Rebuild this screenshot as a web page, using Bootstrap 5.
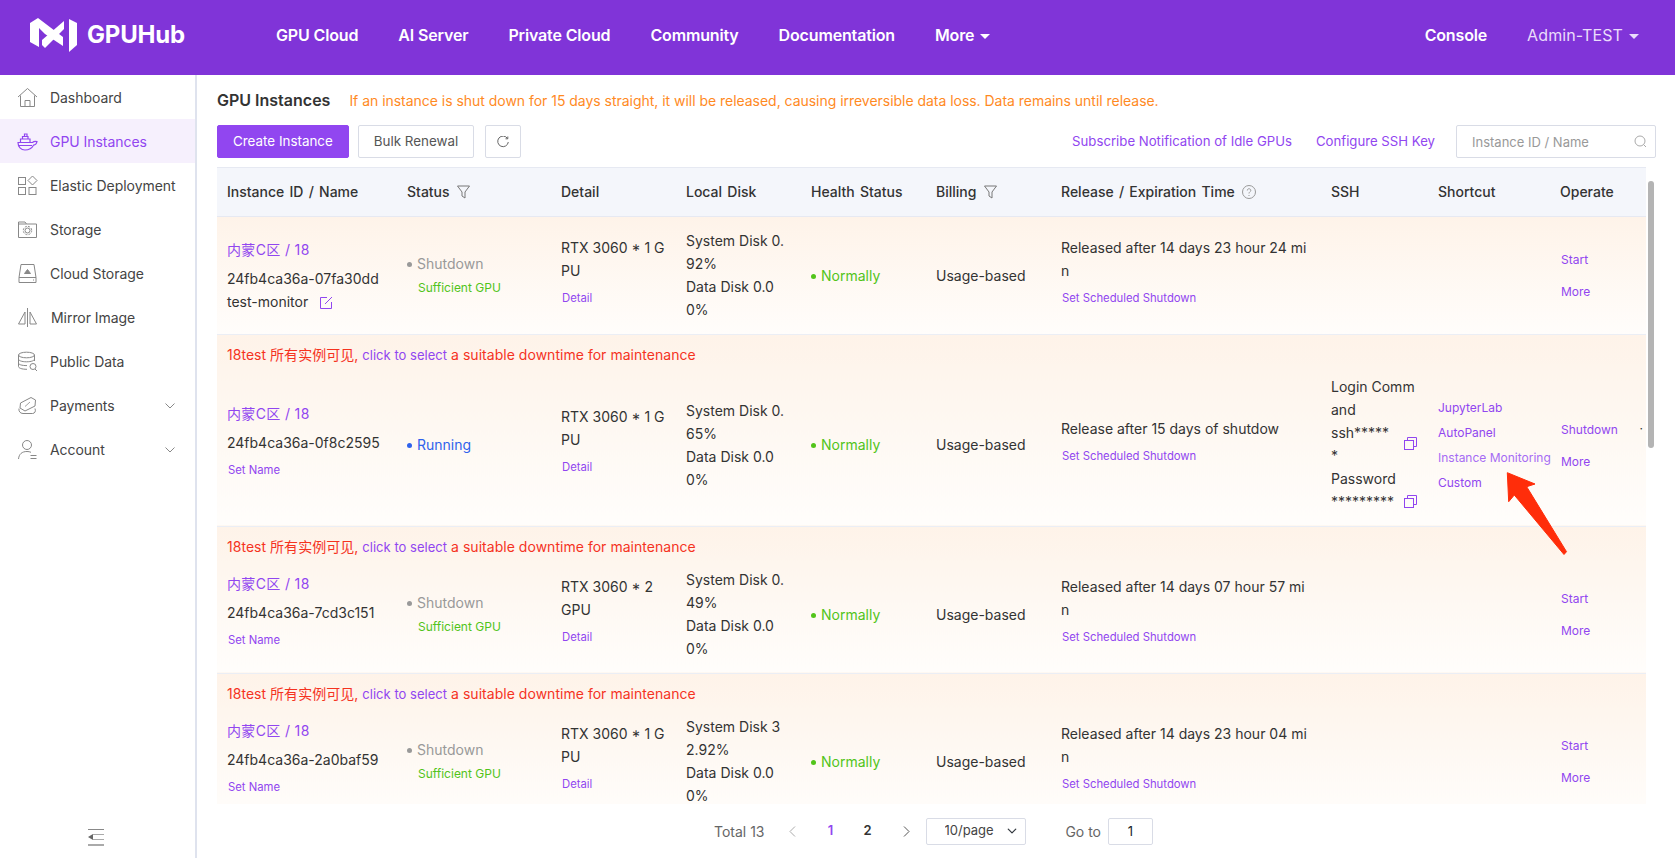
<!DOCTYPE html>
<html lang="en">
<head>
  <meta charset="UTF-8">
  <meta name="viewport" content="width=device-width, initial-scale=1.0">
  <title>GPUHub - GPU Instances</title>
  <link rel="stylesheet" href="https://cdn.jsdelivr.net/npm/bootstrap@5.3.0/dist/css/bootstrap.min.css">
  <style>
    :root { --hub-purple: #9146f0; }
    html, body { height: 100%; }
    body {
      font-family: Inter, "Noto Sans CJK SC", sans-serif;
      font-size: 14px;
      color: #333;
      overflow: hidden;
    }
    a { text-decoration: none; color: var(--hub-purple); }
    .hub-shell { height: 100vh; }
    .hub-top { height: 75px; background: #8034d8; padding: 0 36px 5px 30px; }
    .hub-brand { gap: 10px; width: 246px; color: #fff; font-size: 24px; font-weight: 700; padding: 0; margin: 0; letter-spacing: -.2px; }
    .hub-brand:hover { color: #fff; }
    .hub-top .nav { gap: 40px; }
    .hub-top .nav-link { color: #fff; font-size: 16px; font-weight: 600; padding: 0; letter-spacing: -.15px; }
    .hub-caret { display: inline-block; width: 0; height: 0; border: 5px solid transparent; border-top-color: currentColor; border-bottom: 0; margin-left: 6px; vertical-align: 2px; }
    .hub-top .hub-user { font-weight: 400; color: #eadcfb; letter-spacing: .1px; }
    .hub-main { min-height: 0; }
    .hub-side { width: 197px; flex: none; border-right: 2px solid #dfe3ee; position: relative; }
    .hub-side .nav-link {
      display: flex; align-items: center; height: 44px; padding: 1px 0 0 17px; color: #444; font-size: 14px; gap: 12px; border-radius: 0; letter-spacing: -.05px;
    }
    .hub-side .nav-link svg { flex: none; width: 21px; height: 21px; color: #888; }
    .hub-side .nav-link.active { background: #f6f0fd; color: var(--hub-purple); }
    .hub-side .nav-link.active svg { color: var(--hub-purple); }
    .hub-side .nav-link .hub-chev { margin-left: auto; margin-right: 20px; width: 10px; height: 6px; }
    .hub-mirror { margin-left: 1px; }
    .hub-fold { position: absolute; left: 88px; bottom: 12px; }
    .hub-page { min-width: 0; padding: 0 19px 0 20px; position: relative; }
    .hub-title { height: 50px; }
    .hub-title h1 { font-size: 16px; font-weight: 600; margin: 2px 0 0; color: #333; }
    .hub-warn { color: #ff8a1f; margin-left: 19px; letter-spacing: -.03px; }
    .hub-tools { height: 33px; margin-bottom: 9px; }
    .hub-tools .btn { height: 33px; font-size: 13.4px; padding: 0 15px; border-radius: 2px; }
    .hub-btn-main { background: var(--hub-purple); border-color: var(--hub-purple); color: #fff; }
    .hub-tools .hub-btn-plain { background: #fff; border-color: #d9dce6; color: #555; margin-left: 9px; }
    .hub-tools .hub-btn-icon { width: 36px; padding: 0; margin-left: 11px; display: inline-flex; align-items: center; justify-content: center; }
    .hub-tool-link { font-size: 13.2px; }
    .hub-search { width: 200px; margin-left: 21px; position: relative; }
    .hub-search .form-control { height: 33px; border-radius: 2px; border-color: #d9dce6; font-size: 13px; padding: 0 30px 0 15px; }
    .hub-search .form-control::placeholder { color: #999; }
    .hub-search svg { position: absolute; right: 9px; top: 10px; }
    .hub-tablewrap { height: 637px; overflow: hidden; width: 1429px; position: relative; }
    .hub-table { table-layout: fixed; width: 1429px; margin: 0; --bs-table-bg: transparent; color: #333; }
    .hub-table th {
      height: 49px; background: #f4f6fb; font-weight: 500; color: #333; vertical-align: middle; padding: 0 9px 2px; word-spacing: 1.5px;
      border-top: 1px solid #e6e9f2; border-bottom: 1px solid #e6e9f2;
    }
    .hub-table th svg { margin-left: 2px; vertical-align: -2px; }
    .hub-table th:first-child, .hub-table td:first-child { padding-left: 10px; }
    .hub-table td { padding: 12px 9px 13px; line-height: 23px; vertical-align: middle; word-break: break-all; border: 0; }
    .hub-row { background: linear-gradient(180deg, #fef3e9 0%, #fffdfb 100%); border-bottom: 1px solid #ebeef5; }
    .hub-table td.hub-note { padding: 11px 9px 0 10px; height: 28px; color: #f5331f; word-break: normal; line-height: 17px; letter-spacing: .03px; }
    .hub-note a { font-size: 13px; line-height: 17px; }
    .hub-small { font-size: 11.3px; line-height: 23px; display: block; margin: 5px 0 5px 1px; }
    .hub-name { display: block; margin-bottom: 6px; letter-spacing: .35px; }
    .hub-gray { color: #999; }
    .hub-green { color: #52c41a; }
    .hub-blue { color: #2f62ec; }
    .hub-dot { display: inline-block; width: 5px; height: 5px; border-radius: 50%; background: currentColor; margin-right: 5px; vertical-align: 2px; }
    .hub-hint { color: #52c41a; font-size: 12px; display: block; padding: 1px 0 0 11px; }
    .hub-links a { display: block; font-size: 12px; line-height: 25px; white-space: nowrap; }
    .hub-table td.hub-ops { padding: 14px 9px 13px 10px; }
    .hub-ops a { display: block; font-size: 12px; line-height: 18px; }
    .hub-ops a + a { margin-top: 14px; }
    .hub-links a.hub-light { color: #a66cf4; }
    .hub-table td.hub-ssh { padding-top: 11px; padding-bottom: 13px; }
    .hub-secret { position: relative; }
    .hub-secret svg { position: absolute; left: 73px; bottom: 17px; }
    .hub-secret + .hub-secret svg { bottom: 5px; }
    .hub-more-dot { position: absolute; right: 3px; top: 256px; font-size: 12px; line-height: 1; color: #333; }
    .hub-scroll { position: absolute; left: 1648px; top: 181px; width: 6px; height: 267px; border-radius: 3px; background: #b4b4b4; }
    .hub-arrow { position: absolute; left: 1500px; top: 465px; width: 75px; height: 100px; pointer-events: none; }
    .hub-pager { height: 54px; color: #666; padding-left: 497px; }
    .hub-pager .page-link { border: 0; background: none; padding: 0; font-weight: 600; font-size: 13px; color: #333; text-align: center; width: 38px; }
    .hub-pager .page-item.active .page-link { color: var(--hub-purple); background: none; }
    .hub-pager .form-select { width: 100px; height: 27px; font-size: 13px; border-radius: 2px; border-color: #d9dce6; padding: 0 0 0 18px; color: #444; background-position: right 8px center; background-size: 10px; }
    .hub-pager .form-control { width: 45px; height: 27px; font-size: 13px; border-radius: 2px; border-color: #d9dce6; text-align: center; padding: 0; margin-right: 503px; }
    .hub-goto { margin-right: 7px; }
  </style>
</head>
<body>
  <div class="hub-shell d-flex flex-column">
    <nav class="navbar hub-top flex-nowrap">
      <a class="navbar-brand hub-brand d-flex align-items-center" href="#">
        <svg width="47" height="34" viewBox="0 0 47 34" fill="#fff"><polygon points="0,5 8,0 33,19 33,28 15,16 9,10 9,29 0,24"/><polygon points="34,3 34,11 15,30 12,27 12,22"/><polygon points="39,1 47,5 47,27 39,34"/></svg>
        <span>GPUHub</span>
      </a>
      <ul class="nav me-auto">
        <li class="nav-item"><a class="nav-link" href="#">GPU Cloud</a></li>
        <li class="nav-item"><a class="nav-link" href="#">AI Server</a></li>
        <li class="nav-item"><a class="nav-link" href="#">Private Cloud</a></li>
        <li class="nav-item"><a class="nav-link" href="#">Community</a></li>
        <li class="nav-item"><a class="nav-link" href="#">Documentation</a></li>
        <li class="nav-item"><a class="nav-link" href="#">More<span class="hub-caret"></span></a></li>
      </ul>
      <ul class="nav">
        <li class="nav-item"><a class="nav-link" href="#">Console</a></li>
        <li class="nav-item"><a class="nav-link hub-user" href="#">Admin-TEST<span class="hub-caret"></span></a></li>
      </ul>
    </nav>

    <div class="hub-main d-flex flex-grow-1">
      <aside class="hub-side">
        <nav class="nav flex-column">
          <a class="nav-link" href="#"><svg viewBox="0 0 21 21" fill="none" stroke="currentColor"><path d="M1 10 10.500 1.500 20 10M3.500 8.500V19.500H17.500V8.500M8 19.500V13.500H13V19.500"/></svg>Dashboard</a>
          <a class="nav-link active" href="#"><svg viewBox="0 0 21 21" fill="none" stroke="currentColor" stroke-width="1.200"><path d="M1 11.500H15.500C16.500 10.500 18 10 20 10.500 19.500 13 18 14 16.500 14.200 15 17 12 19 8 19 4 19 1 16 1 11.500Z"/><path d="M3.500 11V8H13V11M5.500 8V5.500H11V8M7.500 5.500V3H10V5.500M2 14.500H15"/></svg>GPU Instances</a>
          <a class="nav-link" href="#"><svg viewBox="0 0 21 21" fill="none" stroke="currentColor"><rect x="1.500" y="2.500" width="7" height="7"/><rect x="1.500" y="12.500" width="7" height="7"/><rect x="12" y="12.500" width="7" height="7"/><path d="M15.500 1 20 5.500 15.500 10 11 5.500Z"/></svg>Elastic Deployment</a>
          <a class="nav-link" href="#"><svg viewBox="0 0 21 21" fill="none" stroke="currentColor"><path d="M1.500 3H8L9.500 5H19.500V18.500H1.500Z"/><path d="M1.500 5H9.500"/><circle cx="10.500" cy="11.500" r="2.500"/><circle cx="10.500" cy="11.500" r="4.200" stroke-dasharray="2 1.300"/></svg>Storage</a>
          <a class="nav-link" href="#"><svg viewBox="0 0 21 21" fill="none" stroke="currentColor"><path d="M4 1.500H17L19 14.500V19.500H2V14.500ZM2 14.500H19"/><path d="M7.500 10.500 10.500 6.500 13.500 10.500Z" fill="currentColor"/><path d="M16 17H17"/></svg>Cloud Storage</a>
          <a class="nav-link" href="#"><svg viewBox="0 0 21 21" fill="none" stroke="currentColor"><path d="M1.500 17H8V5ZM19.500 17H13V5ZM10.500 1V20"/></svg><span class="hub-mirror">Mirror Image</span></a>
          <a class="nav-link" href="#"><svg viewBox="0 0 21 21" fill="none" stroke="currentColor"><ellipse cx="9.500" cy="4" rx="8" ry="2.800"/><path d="M1.500 4V15.500C1.500 17 4.500 18.300 10 18.300M17.500 4V10M1.500 8C1.500 9.500 4.500 10.800 9.500 10.800S17.500 9.500 17.500 8M1.500 12C1.500 13.500 4.500 14.600 10 14.600"/><circle cx="16" cy="15.500" r="3"/><path d="M18 18 20 20"/></svg>Public Data</a>
          <a class="nav-link" href="#"><svg viewBox="0 0 21 21" fill="none" stroke="currentColor"><path d="M3.500 8 14 2.500 18.500 5 18 11 8 16 3 13Z"/><path d="M2 13.500C1.500 16 3 18.500 6 18.500H15.500C18 18.500 19 16 18 13.500"/><path d="M8 11.500 13 7" stroke-width=".8"/></svg>Payments<svg class="hub-chev" viewBox="0 0 10 6" fill="none" stroke="currentColor"><path d="M.5.500 5 5 9.500.500"/></svg></a>
          <a class="nav-link" href="#"><svg viewBox="0 0 21 21" fill="none" stroke="currentColor"><circle cx="10" cy="6" r="4.500"/><path d="M1.500 20C2 15 5 12.500 10 12.500 11.500 12.500 12.800 12.800 14 13.300M13.500 16.500H19.500M13.500 19.500H19.500"/></svg>Account<svg class="hub-chev" viewBox="0 0 10 6" fill="none" stroke="currentColor"><path d="M.5.500 5 5 9.500.500"/></svg></a>
        </nav>
        <svg class="hub-fold" width="16" height="17" viewBox="0 0 16 17"><path d="M0 .500H16" stroke="#888"/><path d="M5 5.500H16M5 10.500H16" stroke="#aaa"/><path d="M0 16H16" stroke="#aaa" stroke-width="2"/><path d="M0 8 5 5V11Z" fill="#666"/></svg>
      </aside>

      <main class="hub-page flex-grow-1">
        <div class="hub-title d-flex align-items-center">
          <h1>GPU Instances</h1>
          <span class="hub-warn">If an instance is shut down for 15 days straight, it will be released, causing irreversible data loss. Data remains until release.</span>
        </div>
        <div class="hub-tools d-flex align-items-center">
          <button class="btn hub-btn-main" type="button">Create Instance</button>
          <button class="btn hub-btn-plain" type="button">Bulk Renewal</button>
          <button class="btn hub-btn-plain hub-btn-icon" type="button" aria-label="Refresh"><svg width="12" height="12" viewBox="0 0 12 12" fill="none" stroke="#666"><path d="M10.500 2.500A5.300 5.300 0 1 0 11.300 6M10.800 .5V2.800H8.500"/></svg></button>
          <a class="hub-tool-link ms-auto" href="#">Subscribe Notification of Idle GPUs</a>
          <a class="hub-tool-link ms-4" href="#">Configure SSH Key</a>
          <div class="hub-search">
            <input class="form-control" type="text" placeholder="Instance ID / Name">
            <svg width="13" height="13" viewBox="0 0 13 13" fill="none" stroke="#aaa"><circle cx="6" cy="6" r="5"/><path d="M9.500 9.500 12 12"/></svg>
          </div>
        </div>

        <div class="hub-tablewrap">
          <table class="table hub-table">
            <colgroup>
              <col style="width:181px"><col style="width:154px"><col style="width:125px"><col style="width:125px"><col style="width:125px"><col style="width:125px"><col style="width:270px"><col style="width:107px"><col style="width:122px"><col style="width:95px">
            </colgroup>
            <thead>
              <tr>
                <th>Instance ID / Name</th>
                <th>Status <svg width="13" height="14" viewBox="0 0 13 14" fill="none" stroke="#777"><path d="M.5 1H12.500L8 7V13L5 11V7Z"/></svg></th>
                <th>Detail</th>
                <th>Local Disk</th>
                <th>Health Status</th>
                <th>Billing <svg width="13" height="14" viewBox="0 0 13 14" fill="none" stroke="#777"><path d="M.5 1H12.500L8 7V13L5 11V7Z"/></svg></th>
                <th>Release / Expiration Time <svg width="14" height="14" viewBox="0 0 14 14" fill="none" stroke="#999"><circle cx="7" cy="7" r="6.500"/><path d="M5.300 5.500C5.300 3 8.800 3.300 8.800 5.400 8.800 6.800 7 6.800 7 8.500M7 10V11"/></svg></th>
                <th>SSH</th>
                <th>Shortcut</th>
                <th>Operate</th>
              </tr>
            </thead>
            <tbody class="hub-row">
              <tr>
                <td><a class="hub-name" href="#">内蒙C区 / 18</a>24fb4ca36a-07fa30dd<br>test-monitor <svg class="ms-2" width="13" height="13" viewBox="0 0 13 13" fill="none" stroke="#9146f0"><path d="M7 1.500H.5V12.500H11.500V6M5 8 12 1"/></svg></td>
                <td><span class="hub-gray"><span class="hub-dot"></span>Shutdown</span><span class="hub-hint">Sufficient GPU</span></td>
                <td>RTX 3060 * 1 G<br>PU<a class="hub-small" href="#">Detail</a></td>
                <td>System Disk 0.<br>92%<br>Data Disk 0.0<br>0%</td>
                <td class="hub-green"><span class="hub-dot"></span>Normally</td>
                <td>Usage-based</td>
                <td>Released after 14 days 23 hour 24 mi<br>n<a class="hub-small" href="#">Set Scheduled Shutdown</a></td>
                <td></td>
                <td></td>
                <td class="hub-ops"><a href="#">Start</a><a href="#">More</a></td>
              </tr>
            </tbody>
            <tbody class="hub-row">
              <tr>
                <td class="hub-note" colspan="10">18test 所有实例可见, <a href="#">click to select</a> a suitable downtime for maintenance</td>
              </tr>
              <tr>
                <td><a class="hub-name" href="#">内蒙C区 / 18</a>24fb4ca36a-0f8c2595<a class="hub-small" href="#">Set Name</a></td>
                <td class="hub-blue"><span class="hub-dot"></span>Running</td>
                <td>RTX 3060 * 1 G<br>PU<a class="hub-small" href="#">Detail</a></td>
                <td>System Disk 0.<br>65%<br>Data Disk 0.0<br>0%</td>
                <td class="hub-green"><span class="hub-dot"></span>Normally</td>
                <td>Usage-based</td>
                <td>Release after 15 days of shutdow<a class="hub-small" href="#">Set Scheduled Shutdown</a></td>
                <td class="hub-ssh">
                  <div class="hub-secret text-nowrap">Login Comm<br>and<br>ssh*****<br>*<svg width="13" height="13" viewBox="0 0 13 13" fill="none" stroke="#9146f0"><rect x=".5" y="3.500" width="9" height="9"/><path d="M3.500 3.500V.5H12.500V9.500H9.500"/></svg></div>
                  <div class="hub-secret text-nowrap">Password<br>*********<svg width="13" height="13" viewBox="0 0 13 13" fill="none" stroke="#9146f0"><rect x=".5" y="3.500" width="9" height="9"/><path d="M3.500 3.500V.5H12.500V9.500H9.500"/></svg></div>
                </td>
                <td class="hub-links"><a href="#">JupyterLab</a><a href="#">AutoPanel</a><a class="hub-light" href="#">Instance Monitoring</a><a href="#">Custom</a></td>
                <td class="hub-ops"><a href="#">Shutdown</a><a href="#">More</a></td>
              </tr>
            </tbody>
            <tbody class="hub-row">
              <tr>
                <td class="hub-note" colspan="10">18test 所有实例可见, <a href="#">click to select</a> a suitable downtime for maintenance</td>
              </tr>
              <tr>
                <td><a class="hub-name" href="#">内蒙C区 / 18</a>24fb4ca36a-7cd3c151<a class="hub-small" href="#">Set Name</a></td>
                <td><span class="hub-gray"><span class="hub-dot"></span>Shutdown</span><span class="hub-hint">Sufficient GPU</span></td>
                <td>RTX 3060 * 2<br>GPU<a class="hub-small" href="#">Detail</a></td>
                <td>System Disk 0.<br>49%<br>Data Disk 0.0<br>0%</td>
                <td class="hub-green"><span class="hub-dot"></span>Normally</td>
                <td>Usage-based</td>
                <td>Released after 14 days 07 hour 57 mi<br>n<a class="hub-small" href="#">Set Scheduled Shutdown</a></td>
                <td></td>
                <td></td>
                <td class="hub-ops"><a href="#">Start</a><a href="#">More</a></td>
              </tr>
            </tbody>
            <tbody class="hub-row">
              <tr>
                <td class="hub-note" colspan="10">18test 所有实例可见, <a href="#">click to select</a> a suitable downtime for maintenance</td>
              </tr>
              <tr>
                <td><a class="hub-name" href="#">内蒙C区 / 18</a>24fb4ca36a-2a0baf59<a class="hub-small" href="#">Set Name</a></td>
                <td><span class="hub-gray"><span class="hub-dot"></span>Shutdown</span><span class="hub-hint">Sufficient GPU</span></td>
                <td>RTX 3060 * 1 G<br>PU<a class="hub-small" href="#">Detail</a></td>
                <td>System Disk 3<br>2.92%<br>Data Disk 0.0<br>0%</td>
                <td class="hub-green"><span class="hub-dot"></span>Normally</td>
                <td>Usage-based</td>
                <td>Released after 14 days 23 hour 04 mi<br>n<a class="hub-small" href="#">Set Scheduled Shutdown</a></td>
                <td></td>
                <td></td>
                <td class="hub-ops"><a href="#">Start</a><a href="#">More</a></td>
              </tr>
            </tbody>
          </table>
          <span class="hub-more-dot">·</span>
        </div>

        <nav class="hub-pager d-flex align-items-center" aria-label="Pagination">
          <span>Total 13</span>
          <svg class="ms-4" width="7" height="11" viewBox="0 0 7 11" fill="none" stroke="#aaa"><path d="M6 .5 1 5.500 6 10.500"/></svg>
          <ul class="pagination mb-0 ms-3 align-items-center">
            <li class="page-item active"><a class="page-link" href="#">1</a></li>
            <li class="page-item"><a class="page-link" href="#">2</a></li>
          </ul>
          <svg class="ms-3" width="7" height="11" viewBox="0 0 7 11" fill="none" stroke="#555"><path d="M1 .5 6 5.500 1 10.500"/></svg>
          <select class="form-select ms-3" aria-label="Page size"><option>10/page</option></select>
          <span class="hub-goto ms-auto">Go to</span>
          <input class="form-control" type="text" value="1" aria-label="Go to page">
        </nav>
      </main>
    </div>
  </div>
  <div class="hub-scroll"></div>
  <svg class="hub-arrow" viewBox="1500 465 75 100"><polygon fill="#ff2d0a" stroke="#ff2d0a" stroke-linejoin="round" points="1507.300,472.700 1535,484 1526.700,486.700 1566.500,551.700 1564,554.500 1514.300,495 1508.700,501.700"/></svg>
</body>
</html>
